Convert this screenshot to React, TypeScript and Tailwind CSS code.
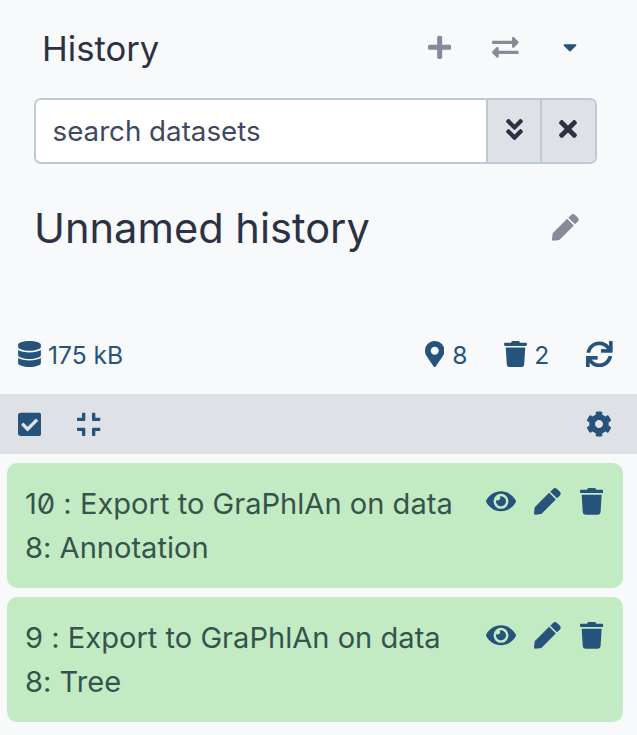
import { FaPlus, FaExchangeAlt, FaCaretDown, FaAngleDoubleDown, FaTimes, FaPen, FaDatabase, FaMapMarkerAlt, FaTrash, FaSync, FaCheckSquare, FaCompress, FaCog, FaEye } from "react-icons/fa";

// one dataset row in the history list
function DatasetCard({ title, subtitle }: { title: string; subtitle: string }) {
  return (
    <div className="h-[125px] w-[616px] rounded-[10px] bg-[#c3ebc3] pl-[18px] pr-[20px] pt-[19px] flex justify-between text-[#36544c]">
      <div className="text-[29.1px] font-[430] leading-[44px] [font-feature-settings:'zero','calt'_0]">
        <div className="whitespace-nowrap">{title}</div>
        <div>{subtitle}</div>
      </div>
      <div className="flex items-start pt-[6px] text-[#25537b]">
        <FaEye className="w-[30px] h-[26.67px]" />
        <FaPen className="w-[26.67px] h-[26.67px] ml-[18px]" />
        <FaTrash className="w-[23.33px] h-[26.67px] ml-[19px]" />
      </div>
    </div>
  );
}

export default function App() {
  return (
    <div className="w-[637px] h-[735px] overflow-hidden bg-[#f8f9fa] font-['Inter',sans-serif] text-[#2c3143]">
      {/* Panel header */}
      <div className="w-[631px] h-[98px] flex items-start justify-between pl-[42px] pr-[54px] pt-[26px]">
        <div className="text-[34.66px] leading-[44px]">History</div>
        <div className="flex items-center mt-[8px] text-[#868b9b]">
          <FaPlus className="w-[23.33px] h-[26.67px]" />
          <FaExchangeAlt className="w-[26.67px] h-[26.67px] ml-[41px]" />
          <FaCaretDown className="w-[14px] h-[22px] ml-[44px] text-[#25537b]" />
        </div>
      </div>

      {/* Search */}
      <div className="ml-[34px] h-[66px] w-[563px] flex rounded-[7px] border-2 border-[#bfc9d4] overflow-hidden">
        <div className="flex-1 bg-white pl-[16.5px] text-[27.73px] leading-[62px] text-[#3f4860]">search datasets</div>
        <div className="w-[54px] bg-[#dee1e6] border-l-2 border-[#bfc9d4] flex items-center justify-center">
          <FaAngleDoubleDown className="w-[17px] h-[27px] -mt-[4px]" />
        </div>
        <div className="w-[55px] bg-[#dee1e6] border-l-2 border-[#bfc9d4] flex items-center justify-center">
          <FaTimes className="w-[18px] h-[26px] -mt-[4px] -ml-[2px]" />
        </div>
      </div>

      {/* History name */}
      <div className="w-[631px] h-[164px] flex items-start justify-between pl-[34px] pr-[52px] pt-[34px]">
        <div className="text-[41.6px] leading-[60px]">Unnamed history</div>
        <FaPen className="w-[26.67px] h-[26.67px] mt-[16px] text-[#868b9b]" />
      </div>

      {/* Stats */}
      <div className="w-[631px] h-[66px] flex items-start justify-between pl-[18px] pr-[18px] pt-[10px] text-[#25537b] text-[24.6px] leading-[30px]">
        <div className="flex items-center gap-[7px]">
          <FaDatabase className="w-[23px] h-[26px]" />
          <span className="mt-[2px]">175 kB</span>
        </div>
        <div className="flex items-center">
          <FaMapMarkerAlt className="w-[19.5px] h-[26px] mr-[8px]" />
          <span className="mt-[2px]">8</span>
          <FaTrash className="w-[23px] h-[26px] ml-[37px] mr-[7px]" />
          <span className="mt-[2px]">2</span>
          <FaSync className="w-[26.67px] h-[26.67px] ml-[37px]" />
        </div>
      </div>

      {/* Toolbar */}
      <div className="h-[60px] bg-[#dee1e6] flex items-center pl-[18px] pr-[25px] text-[#25537b]">
        <FaCheckSquare className="w-[23.33px] h-[26.67px]" />
        <FaCompress className="w-[23.33px] h-[26.67px] ml-[36px]" />
        <FaCog className="w-[26px] h-[26px] ml-auto" />
      </div>

      {/* Dataset list */}
      <div className="flex flex-col gap-[9px] pl-[7px] pt-[9px]">
        <DatasetCard title="10 : Export to GraPhlAn on data" subtitle="8: Annotation" />
        <DatasetCard title="9 : Export to GraPhlAn on data" subtitle="8: Tree" />
      </div>
    </div>
  );
}
